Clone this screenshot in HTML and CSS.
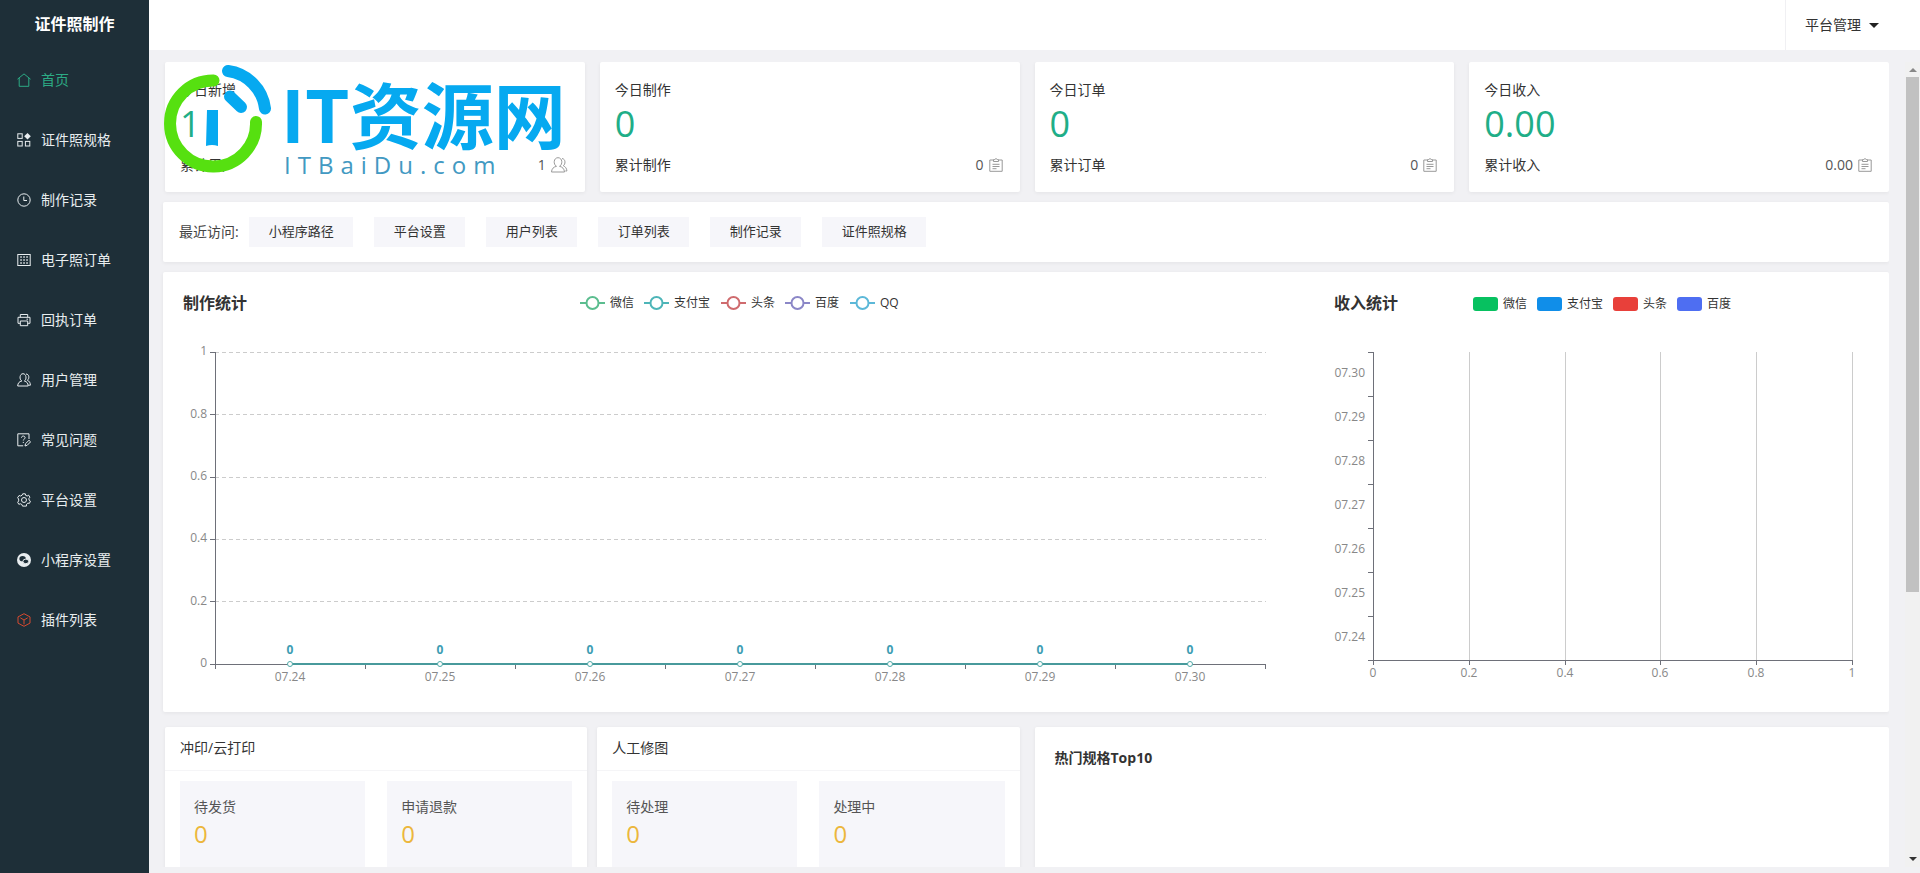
FILE: index.html
```html
<!DOCTYPE html>
<html lang="zh-CN">
<head>
<meta charset="utf-8">
<title>证件照制作</title>
<link rel="stylesheet" href="styles.css">
</head>
<body>
<div class="app">
  <aside class="sidebar">
    <h1 class="brand">证件照制作</h1>
    <nav class="menu">
      <a class="menu-item active" href="#"><svg class="icon" viewBox="0 0 14 14"><path d="M.5 6.2 7 .9l6.500 5.300M2.200 5v8.300h9.600V5"/></svg>首页</a>
      <a class="menu-item" href="#"><svg class="icon" viewBox="0 0 14 14"><rect x=".8" y=".8" width="4.400" height="4.600"/><rect x=".8" y="8.400" width="4.400" height="4.600"/><rect x="8.400" y="8.400" width="4.400" height="4.600"/><path class="solid" d="M10.500 0l3.300 3.300-3.300 3.300-3.300-3.300z"/></svg>证件照规格</a>
      <a class="menu-item" href="#"><svg class="icon" viewBox="0 0 14 14"><circle cx="7" cy="7" r="6.200"/><path d="M6.800 3.500v4h3.200"/></svg>制作记录</a>
      <a class="menu-item" href="#"><svg class="icon" viewBox="0 0 14 14"><rect x=".8" y="1.500" width="12.400" height="11"/><path d="M3.300 4h1.500M6.300 4h1.500M9.300 4h1.500M3.300 7h1.500M6.300 7h1.500M9.300 7h1.500M3.300 10h1.500M6.300 10h1.500M9.300 10h1.500" stroke-width="1.600"/></svg>电子照订单</a>
      <a class="menu-item" href="#"><svg class="icon" viewBox="0 0 14 14"><path d="M3.300 4.300V1.500h7.400v2.800M3.300 10.300H1V4.300h12v6h-2.300M3.300 8h7.400v4.700H3.300zM9.500 6.200h1.500"/></svg>回执订单</a>
      <a class="menu-item" href="#"><svg class="icon" viewBox="0 0 14 14"><path d="M4.800 8C2 6.500 2.600.7 6 .7S10 6.500 7.400 8c2.400.6 3.600 2 3.800 5H.7c.1-3 1.500-4.400 4.100-5zM9 1c3.600.2 3.400 5 1.400 6.300 2 .9 3 2.500 3 4.900h-2"/></svg>用户管理</a>
      <a class="menu-item" href="#"><svg class="icon" viewBox="0 0 14 14"><path d="M12 6V.8H.8v12.000h5.400M4.500 4.700c0-2.200 3.600-2.200 3.600 0 0 1.500-1.800 1.300-1.800 2.800M6.300 8.900v1.100M8 13l.5-2.300L12 7.300l1.600 1.500-3.400 3.500z"/></svg>常见问题</a>
      <a class="menu-item" href="#"><svg class="icon" viewBox="0 0 14 14"><circle cx="7" cy="7" r="2.500"/><path d="M5.700.8h2.600l.4 1.600 1.500.6 1.400-.8 1.300 2-1 1.300.2 1.600 1.300 1-.9 2.200-1.700-.1-1.200 1-.2 1.900H5.500l-.6-1.600-1.500-.7-1.600.5L.7 9.300l1-1.400L1.600 6 .6 4.700l1.500-2.200 1.500.5 1.500-.8z"/></svg>平台设置</a>
      <a class="menu-item" href="#"><svg class="icon" viewBox="0 0 14 14"><circle class="solid" cx="7" cy="7" r="7"/><ellipse class="hole" cx="5.600" cy="5.700" rx="3.200" ry="2.600"/><ellipse class="hole rim" cx="8.800" cy="8.400" rx="2.900" ry="2.300"/></svg>小程序设置</a>
      <a class="menu-item plugin" href="#"><svg class="icon" viewBox="0 0 14 14"><path d="M7 .7l6 3.200v6.200l-6 3.200-6-3.200V3.900zM3.300 4.800 7 7l3.700-2.200M7 7v4.300"/></svg>插件列表</a>
    </nav>
  </aside>

  <div class="main">
    <header class="topbar">
      <button class="account" type="button">平台管理<span class="caret"></span></button>
    </header>

    <div class="viewport">
      <main class="content">
        <section class="stats">
          <article class="card stat">
            <div class="label">今日新增</div>
            <div class="value">1</div>
            <div class="total"><span>累计用户</span><span class="sum">1<svg class="icon wide" viewBox="1 0 17 16"><path d="M6.500 9.300C3 7.500 3.500.7 8 .7s5 6.800 1.500 8.600c3 .7 4.700 2.400 5 5.700H1.500c.2-3.300 2-5 5-5.700zM12 1.500c4 .5 3.500 6 1.300 7.200 2.200 1 3.400 2.800 3.600 5.300h-1.600"/></svg></span></div>
          </article>
          <article class="card stat">
            <div class="label">今日制作</div>
            <div class="value">0</div>
            <div class="total"><span>累计制作</span><span class="sum">0<svg class="icon" viewBox="0 0 14 14"><path d="M4 2H.8v11.300h12.400V2H10M4.500 3.500V1.500h1.300L7 .5l1.200 1h1.300v2zM3.500 6.300h7M3.500 8.500h7M3.500 10.700h4"/></svg></span></div>
          </article>
          <article class="card stat">
            <div class="label">今日订单</div>
            <div class="value">0</div>
            <div class="total"><span>累计订单</span><span class="sum">0<svg class="icon" viewBox="0 0 14 14"><path d="M4 2H.8v11.300h12.400V2H10M4.500 3.500V1.500h1.300L7 .5l1.200 1h1.300v2zM3.500 6.300h7M3.500 8.500h7M3.500 10.700h4"/></svg></span></div>
          </article>
          <article class="card stat">
            <div class="label">今日收入</div>
            <div class="value">0.00</div>
            <div class="total"><span>累计收入</span><span class="sum">0.00<svg class="icon" viewBox="0 0 14 14"><path d="M4 2H.8v11.300h12.400V2H10M4.500 3.500V1.500h1.300L7 .5l1.200 1h1.300v2zM3.500 6.300h7M3.500 8.500h7M3.500 10.700h4"/></svg></span></div>
          </article>
        </section>

        <section class="card recent">
          <span class="recent-label">最近访问:</span>
          <button class="chip" type="button">小程序路径</button>
          <button class="chip" type="button">平台设置</button>
          <button class="chip" type="button">用户列表</button>
          <button class="chip" type="button">订单列表</button>
          <button class="chip" type="button">制作记录</button>
          <button class="chip" type="button">证件照规格</button>
        </section>

        <section class="card charts">
          <svg class="chart" viewBox="0 0 1151 440" role="img" aria-label="制作统计">
            <text class="chart-title" x="20" y="37">制作统计</text>
            <g class="legend-line">
              <g stroke="#5bbd8f"><path d="M417 31h25"/><circle cx="429.500" cy="31" r="6"/></g>
              <g stroke="#4db5b8"><path d="M481 31h25"/><circle cx="493.500" cy="31" r="6"/></g>
              <g stroke="#cf6b6e"><path d="M558 31h25"/><circle cx="570.500" cy="31" r="6"/></g>
              <g stroke="#8b87c7"><path d="M622 31h25"/><circle cx="634.500" cy="31" r="6"/></g>
              <g stroke="#5cb8d8"><path d="M687 31h25"/><circle cx="699.500" cy="31" r="6"/></g>
            </g>
            <g class="legend-text">
              <text x="447" y="35">微信</text><text x="511" y="35">支付宝</text><text x="588" y="35">头条</text><text x="652" y="35">百度</text><text x="717" y="35">QQ</text>
            </g>
            <path class="grid dashed" d="M52 80.500H1103M52 142.500H1103M52 205.500H1103M52 267.500H1103M52 329.500H1103"/>
            <path class="axis" d="M52.500 80V397M47 80.500h5M47 142.500h5M47 205.500h5M47 267.500h5M47 329.500h5M47 392.500H1103M202.500 392v5M352.500 392v5M502.500 392v5M652.500 392v5M802.500 392v5M952.500 392v5M1102.500 392v5"/>
            <g class="tick end">
              <text x="44" y="83">1</text><text x="44" y="146">0.8</text><text x="44" y="208">0.6</text><text x="44" y="270">0.4</text><text x="44" y="333">0.2</text><text x="44" y="395">0</text>
            </g>
            <g class="tick middle">
              <text x="127" y="409">07.24</text><text x="277" y="409">07.25</text><text x="427" y="409">07.26</text><text x="577" y="409">07.27</text><text x="727" y="409">07.28</text><text x="877" y="409">07.29</text><text x="1027" y="409">07.30</text>
            </g>
            <path class="series" d="M127 392H1027"/>
            <g class="points">
              <circle cx="127" cy="392" r="2.500"/><circle cx="277" cy="392" r="2.500"/><circle cx="427" cy="392" r="2.500"/><circle cx="577" cy="392" r="2.500"/><circle cx="727" cy="392" r="2.500"/><circle cx="877" cy="392" r="2.500"/><circle cx="1027" cy="392" r="2.500"/>
            </g>
            <g class="point-value">
              <text x="127" y="382">0</text><text x="277" y="382">0</text><text x="427" y="382">0</text><text x="577" y="382">0</text><text x="727" y="382">0</text><text x="877" y="382">0</text><text x="1027" y="382">0</text>
            </g>
          </svg>

          <svg class="chart" viewBox="0 0 575 440" role="img" aria-label="收入统计">
            <text class="chart-title" x="20" y="37">收入统计</text>
            <rect x="159" y="25" width="25" height="14" rx="3" fill="#07c160"/>
            <rect x="223" y="25" width="25" height="14" rx="3" fill="#108ee9"/>
            <rect x="299" y="25" width="25" height="14" rx="3" fill="#e8403a"/>
            <rect x="363" y="25" width="25" height="14" rx="3" fill="#4e6ef2"/>
            <g class="legend-text">
              <text x="189" y="36">微信</text><text x="253" y="36">支付宝</text><text x="329" y="36">头条</text><text x="393" y="36">百度</text>
            </g>
            <path class="grid" d="M155.500 80V388M251.500 80V388M346.500 80V388M442.500 80V388M538.500 80V388"/>
            <path class="axis" d="M59.500 80V393M54 80.500h5M54 124.500h5M54 168.500h5M54 212.500h5M54 256.500h5M54 300.500h5M54 344.500h5M54 388.500H539M155.500 388v5M251.500 388v5M346.500 388v5M442.500 388v5M538.500 388v5"/>
            <g class="tick end">
              <text x="51" y="105">07.30</text><text x="51" y="149">07.29</text><text x="51" y="193">07.28</text><text x="51" y="237">07.27</text><text x="51" y="281">07.26</text><text x="51" y="325">07.25</text><text x="51" y="369">07.24</text>
            </g>
            <g class="tick middle">
              <text x="59" y="405">0</text><text x="155" y="405">0.2</text><text x="251" y="405">0.4</text><text x="346" y="405">0.6</text><text x="442" y="405">0.8</text><text x="538" y="405">1</text>
            </g>
          </svg>
        </section>

        <section class="bottom">
          <div class="pair">
            <article class="card">
              <h2 class="card-head">冲印/云打印</h2>
              <div class="boxes">
                <div class="box"><div>待发货</div><div class="count">0</div></div>
                <div class="box"><div>申请退款</div><div class="count">0</div></div>
              </div>
            </article>
            <article class="card">
              <h2 class="card-head">人工修图</h2>
              <div class="boxes">
                <div class="box"><div>待处理</div><div class="count">0</div></div>
                <div class="box"><div>处理中</div><div class="count">0</div></div>
              </div>
            </article>
          </div>
          <article class="card top10"><h2>热门规格Top10</h2></article>
        </section>
      </main>

      <div class="scrollbar"><span class="arrow up"></span><span class="thumb"></span><span class="arrow down"></span></div>
    </div>
  </div>

  <div class="watermark">
    <svg width="410" height="130" viewBox="160 60 410 130">
      <g class="ring">
        <path class="green" d="M213.500 80.500A43 43 0 1 0 256 122"/>
        <path class="blue" d="M228 71A43 43 0 0 1 265 108.500"/>
        <path class="blue" d="M230 96.500 241 107"/>
      </g>
      <path class="bar" d="M207 110H218V146Q212 144 206 146Z"/>
      <text class="mark-name" x="281" y="143">IT资源网</text>
      <text class="mark-site" x="284" y="174">ITBaiDu.com</text>
    </svg>
  </div>
</div>
</body>
</html>
```

FILE: styles.css
```css
* { box-sizing: border-box; }

body {
  margin: 0;
  font: 14px/20px "Open Sans", "Noto Sans CJK SC", sans-serif;
  color: #333;
  background: #f1f1f4;
}

h1, h2 { margin: 0; }

button {
  border: 0;
  font: inherit;
  color: inherit;
  cursor: pointer;
}

.app {
  position: relative;
  display: flex;
  height: 100vh;
  overflow: hidden;
}

/* Sidebar */
.sidebar {
  flex: none;
  width: 149px;
  background: #1e2f38;
  color: #fff;
}

.brand {
  height: 50px;
  font-size: 16px;
  line-height: 48px;
  text-align: center;
}

.menu-item {
  display: flex;
  align-items: center;
  gap: 10px;
  height: 60px;
  padding-left: 17px;
  color: #e8edef;
  text-decoration: none;
}

.menu-item.active { color: #2cab85; }

.icon {
  flex: none;
  width: 14px;
  height: 14px;
  fill: none;
  stroke: currentColor;
}

.menu-item .solid { fill: currentColor; stroke: none; }
.menu-item .hole { fill: #1e2f38; stroke: none; }
.menu-item .rim { stroke: #e8edef; }
.plugin .icon { stroke: #d64a30; }

/* Header */
.main {
  flex: 1;
  min-width: 0;
  display: flex;
  flex-direction: column;
}

.topbar {
  flex: none;
  display: flex;
  justify-content: flex-end;
  height: 50px;
  background: #fff;
}

.account {
  display: flex;
  align-items: center;
  gap: 8px;
  padding: 0 41px 0 19px;
  border-left: 1px solid #f0f0f3;
  background: none;
}

.caret {
  border: 5px solid transparent;
  border-top: 5px solid #222;
  border-bottom: 0;
}

/* Scroll area */
.viewport {
  flex: 1;
  min-height: 0;
  display: flex;
  gap: 16px;
  margin: 12px 0 6px;
}

.content {
  flex: 1;
  min-width: 0;
  display: flex;
  flex-direction: column;
  gap: 10px;
  padding-left: 14px;
  overflow: hidden;
}

.card {
  background: #fff;
  border-radius: 2px;
  box-shadow: 0 1px 4px rgba(0, 0, 0, .06);
}

.scrollbar {
  flex: none;
  display: flex;
  flex-direction: column;
  align-items: center;
  width: 15px;
  background: #f1f1f1;
}

.scrollbar .thumb {
  flex: 0 0 64%;
  width: 13px;
  margin: 5px 0 auto;
  background: #c1c1c1;
}

.arrow { border: 4px solid transparent; margin: 6px 0; }
.arrow.up { border-top: 0; border-bottom-color: #888; margin-bottom: 0; }
.arrow.down { border-bottom: 0; border-top-color: #333; }

/* Statistic cards */
.stats {
  flex: none;
  display: grid;
  grid-template-columns: repeat(4, 1fr);
  gap: 15px;
  padding-left: 2px;
}

.stat { padding: 18px 17px 15px 15px; }

.value {
  margin: 4px 0 8px;
  font-size: 36px;
  line-height: 40px;
  color: #1fae88;
}

.total {
  display: flex;
  justify-content: space-between;
  line-height: 25px;
}

.sum {
  display: flex;
  align-items: center;
  gap: 5px;
  color: #555;
}

.sum .icon { stroke: #999; }
.sum .wide { width: 17px; height: 16px; }

/* Recent pages */
.recent {
  flex: none;
  display: flex;
  align-items: center;
  gap: 21px;
  min-height: 60px;
  padding: 0 16px;
}

.recent-label { margin-right: -11px; color: #444; }

.chip {
  height: 30px;
  padding: 0 19px 2px 20px;
  font-size: 13px;
  background: #f6f6fa;
}

/* Charts */
.charts {
  flex: none;
  display: grid;
  grid-template-columns: 1151fr 575fr;
}

.chart { display: block; width: 100%; }
.chart-title { font-size: 16px; font-weight: 700; fill: #333; }
.legend-text { font-size: 12px; fill: #333; }
.legend-line { fill: #fff; stroke-width: 2; }
.grid { fill: none; stroke: #ccc; }
.dashed { stroke-dasharray: 4 3; }
.axis { fill: none; stroke: #6e7079; }
.tick { font-size: 12px; fill: #888; }
.end { text-anchor: end; }
.middle { text-anchor: middle; }
.series { stroke: #489a9c; stroke-width: 2; }
.points { fill: #fff; stroke: #4fa9a8; }
.point-value { font-size: 12px; font-weight: 700; fill: #3d9db3; text-anchor: middle; }

/* Bottom row */
.bottom {
  flex: none;
  display: grid;
  grid-template-columns: 1fr 1fr;
  gap: 15px;
  margin-top: 5px;
  padding-left: 2px;
}

.pair {
  display: grid;
  grid-template-columns: 1fr 1fr;
  gap: 10px;
}

.card-head {
  padding: 0 15px 1px;
  font-size: 14px;
  font-weight: 400;
  line-height: 42px;
  border-bottom: 1px solid #f5f5f7;
}

.boxes {
  display: grid;
  grid-template-columns: 1fr 1fr;
  gap: 22px;
  padding: 10px 15px 15px;
}

.box {
  min-height: 100px;
  padding: 16px 14px;
  color: #555;
  background: #f6f6fa;
}

.count {
  margin-top: 3px;
  font-size: 24px;
  line-height: 28px;
  color: #ecb73c;
}

.top10 { padding: 21px 20px; }
.top10 h2 { font-size: 14px; line-height: 20px; }

/* Site mark over the first card */
.watermark {
  position: absolute;
  left: 160px;
  top: 60px;
  pointer-events: none;
}

.watermark svg { display: block; }
.ring { fill: none; stroke-width: 12; stroke-linecap: round; }
.green { stroke: #56e010; }
.blue { stroke: #06a9f0; }
.bar { fill: #06a9f0; }
.mark-name { font: 700 72px "Noto Sans CJK SC", sans-serif; fill: #06a9f0; }
.mark-site { font-size: 24px; letter-spacing: 7px; fill: #4299c2; }
```
